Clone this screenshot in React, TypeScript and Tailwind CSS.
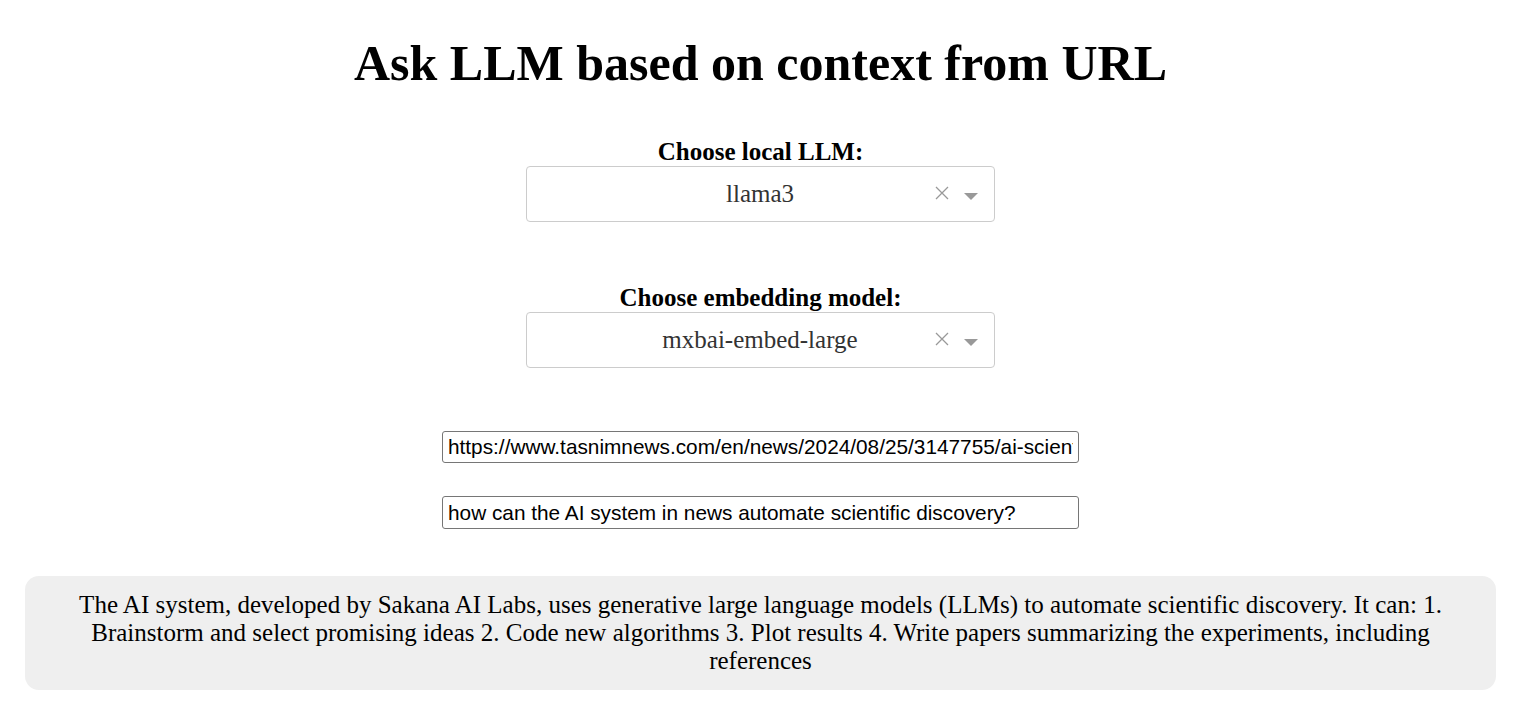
import React, { useState } from 'react';

const serif = { fontFamily: '"Liberation Serif", "Times New Roman", serif' };
const sans = { fontFamily: '"Liberation Sans", Arial, sans-serif' };

const models = ['llama3', 'mistral', 'gemma2'];
const embeddings = ['mxbai-embed-large', 'nomic-embed-text'];

// react-select style picker
const Picker = ({ label, value }: { label: string; value: string }) => (
  <div className="flex flex-col items-center">
    <label className="text-[25px] font-bold leading-[28px] text-black">{label}</label>
    <div className="flex h-[56px] w-[469px] items-center rounded border border-[#cccccc] bg-white">
      <div className="flex-1 pl-[58px] text-center text-[25px] text-[#333333]">{value}</div>
      <div className="flex items-center pr-[16px]">
        <svg width="14" height="14" viewBox="0 0 14 14" className="mt-[-3px]">
          <path d="M1 1L13 13M13 1L1 13" stroke="#999999" strokeWidth="1.3" />
        </svg>
        <svg width="14" height="8" viewBox="0 0 14 8" className="ml-[15px] mt-[6px] fill-[#999999]">
          <path d="M0 0h14l-7 7z" />
        </svg>
      </div>
    </div>
  </div>
);

const App = () => {
  const [llm] = useState(models[0]);
  const [embed] = useState(embeddings[0]);
  const [url, setUrl] = useState('https://www.tasnimnews.com/en/news/2024/08/25/3147755/ai-scientist-automates-scientific-discovery');
  const [question, setQuestion] = useState('how can the AI system in news automate scientific discovery?');

  return (
    <div className="min-h-screen w-[1521px] bg-white text-black" style={serif}>
      <h1 className="pt-[33px] text-center text-[50px] font-bold leading-[60px]">Ask LLM based on context from URL</h1>

      <div className="mt-[45px] flex flex-col items-center gap-[62px]">
        <Picker label="Choose local LLM:" value={llm} />
        <Picker label="Choose embedding model:" value={embed} />
      </div>

      <div className="mt-[63px] flex flex-col items-center gap-[33px]">
        <input
          value={url}
          onChange={(e) => setUrl(e.target.value)}
          className="h-[32px] w-[637px] rounded-[3px] border border-[#767676] px-[5px] text-[20.8px] text-black outline-none"
          style={sans}
        />
        <input
          value={question}
          onChange={(e) => setQuestion(e.target.value)}
          className="h-[33px] w-[637px] rounded-[3px] border border-[#767676] px-[5px] text-[20.8px] text-black outline-none"
          style={sans}
        />
      </div>

      <div className="mx-[25px] mt-[47px] rounded-[14px] bg-[#efefef] px-[40px] pt-[15px] pb-[15px] text-center text-[25px] leading-[28px]">
        The AI system, developed by Sakana AI Labs, uses generative large language models (LLMs) to automate scientific discovery. It can: 1. Brainstorm and select promising ideas 2. Code new algorithms 3. Plot results 4. Write papers summarizing the experiments, including references
      </div>
    </div>
  );
};

export default App;
